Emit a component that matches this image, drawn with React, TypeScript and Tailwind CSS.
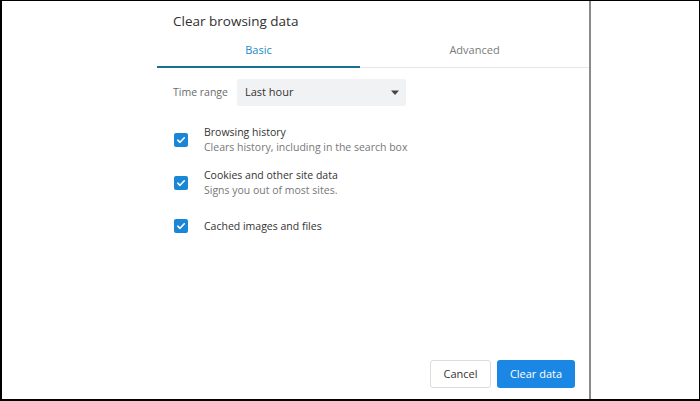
import React from 'react';

const items = [
  { title: 'Browsing history', sub: 'Clears history, including in the search box' },
  { title: 'Cookies and other site data', sub: 'Signs you out of most sites.' },
  { title: 'Cached images and files', sub: '' },
];

const Check = () => (
  <span className="w-[14px] h-[14px] rounded-[2px] bg-[#1a87d6] flex items-center justify-center shrink-0">
    <svg width="10" height="10" viewBox="0 0 10 10" fill="none">
      <path d="M1.8 5.2 L4 7.3 L8.3 2.8" stroke="white" strokeWidth="1.6" strokeLinecap="round" strokeLinejoin="round" />
    </svg>
  </span>
);

export default function App() {
  return (
    <div
      className="w-[700px] h-[401px] bg-white border-l-2 border-t border-r border-b-2 border-black flex text-[#333]"
      style={{ fontFamily: '"Open Sans", "Noto Sans", sans-serif' }}
    >
      <div className="w-[155px] shrink-0" />

      {/* Dialog */}
      <div className="w-[432px] shrink-0 flex flex-col">
        <div className="pl-[16px] pt-[10px] h-[40px] text-[13.5px] text-[#303030]">Clear browsing data</div>

        {/* Tabs */}
        <div className="flex h-[27px] text-[11px]">
          <div className="w-[203px] flex justify-center items-start pt-[1px] text-[#1a88c9] border-b-2 border-[#1b6f8f]">
            Basic
          </div>
          <div className="flex-1 flex justify-center items-start pt-[1px] text-[#7a7a7a] border-b border-[#e6e6e6]">
            Advanced
          </div>
        </div>

        {/* Time range */}
        <div className="flex items-center pl-[16px] mt-[11px] text-[10.5px]">
          <span className="text-[#6b6b6b] w-[64px]">Time range</span>
          <div className="w-[169px] h-[27px] bg-[#f1f2f3] rounded-[2px] flex items-center justify-between pl-[8px] pr-[6px] text-[11px] text-[#333]">
            <span>Last hour</span>
            <svg width="10" height="6" viewBox="0 0 10 6">
              <path d="M1 0.5 H9 L5 5 Z" fill="#444" />
            </svg>
          </div>
        </div>

        {/* Checkboxes */}
        <div className="flex flex-col pl-[17px] mt-[19px] gap-[13px] text-[10.5px]">
          {items.map((it) => (
            <div key={it.title} className="flex items-center gap-[16px] min-h-[30px]">
              <Check />
              <div className="flex flex-col leading-[15px]">
                <span className="text-[#333]">{it.title}</span>
                {it.sub && <span className="text-[#777]">{it.sub}</span>}
              </div>
            </div>
          ))}
        </div>

        <div className="flex-1" />

        {/* Buttons */}
        <div className="flex justify-end gap-[6px] pr-[14px] pb-[11px] text-[11px]">
          <button className="w-[61px] h-[28px] border border-[#dadce0] rounded-[3px] bg-white text-[#333]">
            Cancel
          </button>
          <button className="w-[78px] h-[28px] rounded-[3px] bg-[#1a87e5] text-white">Clear data</button>
        </div>
      </div>

      <div className="w-[2px] bg-[#8a8a8a] shrink-0" />
      <div className="flex-1" />
    </div>
  );
}
